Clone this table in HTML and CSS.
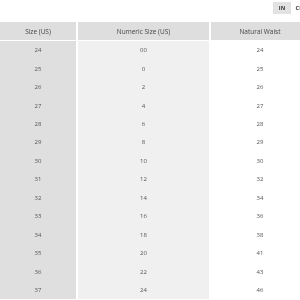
FILE: index.html
```html
<!DOCTYPE html>
<html>
<head>
<meta charset="utf-8">
<link rel="stylesheet" href="styles.css">
</head>
<body>
<div class="chart">
  <div class="units">
    <span class="unit active">IN</span>
    <span class="unit">CM</span>
  </div>
  <table class="sizes">
    <thead>
      <tr><th class="c1">Size (US)</th><th class="c2">Numeric Size (US)</th><th class="c3">Natural Waist</th></tr>
    </thead>
    <tbody>
      <tr><td class="c1">24</td><td class="c2">00</td><td class="c3">24</td></tr>
      <tr><td class="c1">25</td><td class="c2">0</td><td class="c3">25</td></tr>
      <tr><td class="c1">26</td><td class="c2">2</td><td class="c3">26</td></tr>
      <tr><td class="c1">27</td><td class="c2">4</td><td class="c3">27</td></tr>
      <tr><td class="c1">28</td><td class="c2">6</td><td class="c3">28</td></tr>
      <tr><td class="c1">29</td><td class="c2">8</td><td class="c3">29</td></tr>
      <tr><td class="c1">30</td><td class="c2">10</td><td class="c3">30</td></tr>
      <tr><td class="c1">31</td><td class="c2">12</td><td class="c3">32</td></tr>
      <tr><td class="c1">32</td><td class="c2">14</td><td class="c3">34</td></tr>
      <tr><td class="c1">33</td><td class="c2">16</td><td class="c3">36</td></tr>
      <tr><td class="c1">34</td><td class="c2">18</td><td class="c3">38</td></tr>
      <tr><td class="c1">35</td><td class="c2">20</td><td class="c3">41</td></tr>
      <tr><td class="c1">36</td><td class="c2">22</td><td class="c3">43</td></tr>
      <tr><td class="c1">37</td><td class="c2">24</td><td class="c3">46</td></tr>
    </tbody>
  </table>
</div>
</body>
</html>
```
FILE: styles.css
```css
html, body {
  margin: 0;
  padding: 0;
  overflow: hidden;
  background: #fff;
}
body {
  font-family: "Open Sans", "Liberation Sans", sans-serif;
  color: #555;
}
.chart {
  width: 309px;
  will-change: transform;
}
.units {
  display: flex;
  justify-content: flex-end;
  padding-top: 2px;
  height: 20px;
  box-sizing: border-box;
}
.unit {
  width: 18px;
  height: 12px;
  display: flex;
  align-items: center;
  justify-content: center;
  font-size: 5.5px;
  font-weight: 700;
  color: #333;
  letter-spacing: 0.2px;
}
.unit.active {
  background: #e2e2e2;
}
.sizes {
  margin-top: 2px;
  width: 309px;
  border-collapse: separate;
  border-spacing: 0;
  table-layout: fixed;
}
.sizes th, .sizes td {
  padding: 0;
  text-align: center;
  border-right: 2px solid #fff;
}
.sizes th {
  height: 18px;
  background: #dedede;
  font-size: 6.5px;
  font-weight: 400;
  color: #444;
  border-bottom: 1px solid #fff;
}
.sizes td {
  height: 18.46px;
  font-size: 6px;
  color: #555;
}
.c1 { width: 76px; }
.c2 { width: 131px; }
.c3 { width: 98px; border-right: 0 !important; }
td.c1 { background: #dfdfdf; }
td.c2 { background: #f0f0f0; }
td.c3 { background: #fff; }
```
